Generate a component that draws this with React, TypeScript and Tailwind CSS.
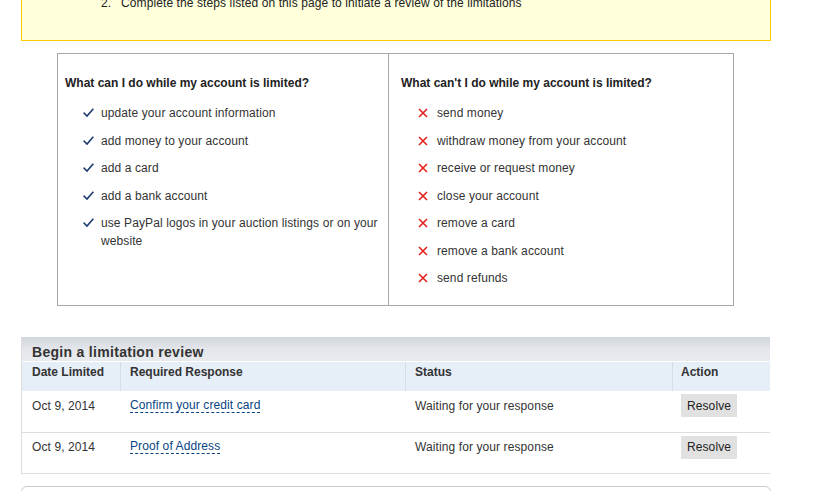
import React from "react";

const Check = () => (
  <svg width="11" height="10" viewBox="0 0 11 10" fill="none">
    <path d="M1.2 5.2 L4 8 L9.8 1.4" stroke="#1c3a6e" strokeWidth="1.6" strokeLinecap="square" strokeLinejoin="miter" />
  </svg>
);

const Cross = () => (
  <svg width="10" height="10" viewBox="0 0 10 10" fill="none">
    <path d="M1 1 L9 9 M9 1 L1 9" stroke="#e3211c" strokeWidth="1.6" />
  </svg>
);

const can = [
  "update your account information",
  "add money to your account",
  "add a card",
  "add a bank account",
  "use PayPal logos in your auction listings or on your website",
];

const cant = [
  "send money",
  "withdraw money from your account",
  "receive or request money",
  "close your account",
  "remove a card",
  "remove a bank account",
  "send refunds",
];

const rows = [
  { date: "Oct 9, 2014", resp: "Confirm your credit card" },
  { date: "Oct 9, 2014", resp: "Proof of Address" },
];

export default function App() {
  return (
    <div className="bg-white w-[827px] h-[491px] overflow-hidden font-['Liberation_Sans',Arial,sans-serif] text-[12px] text-[#333] tracking-[0.1px]">
      <div className="ml-[21px] w-[750px] -mt-[25px] border border-[#ffcc00] bg-[#ffffdc] pl-[79px] pt-[20px] pb-[29px] leading-[15px] text-[#222]">
        <div className="flex">
          <span className="w-[20px]">2.</span>
          <span>Complete the steps listed on this page to initiate a review of the limitations</span>
        </div>
      </div>

      <div className="mt-[12px] ml-[57px] w-[677px] h-[253px] border border-[#a8a8a8] flex">
        <div className="w-[331px] border-r border-[#a8a8a8] pl-[7px] pt-[20px] pr-[2px]">
          <div className="font-bold leading-[18px] text-[#222] tracking-normal">What can I do while my account is limited?</div>
          <ul className="mt-[12px] pl-[18px] flex flex-col gap-[9.5px]">
            {can.map((t) => (
              <li key={t} className="flex items-start leading-[18px]">
                <div className="w-[18px] h-[18px] flex items-center shrink-0">
                  <Check />
                </div>
                <span>{t}</span>
              </li>
            ))}
          </ul>
        </div>
        <div className="flex-1 pl-[12px] pt-[20px]">
          <div className="font-bold leading-[18px] text-[#222] tracking-normal">What can't I do while my account is limited?</div>
          <ul className="mt-[12px] pl-[17px] flex flex-col gap-[9.5px]">
            {cant.map((t) => (
              <li key={t} className="flex items-start leading-[18px]">
                <div className="w-[19px] h-[18px] flex items-center shrink-0">
                  <Cross />
                </div>
                <span>{t}</span>
              </li>
            ))}
          </ul>
        </div>
      </div>

      <div className="mt-[31px] ml-[21px] w-[749px] border-l border-[#dcdcdc]">
        <div className="h-[25px] bg-gradient-to-b from-[#d2d7dd] via-[#e3e6ea] to-[#e8ebee] border-b border-white pl-[10px] pt-[7px] leading-[17px] text-[14px] font-bold tracking-[0.3px] text-[#333]">
          Begin a limitation review
        </div>
        <div className="grid grid-cols-[98px_285px_267px_98px] h-[29px] bg-[#e6eef8] font-bold leading-[15px] text-[#333] tracking-normal">
          <div className="pl-[10px] pt-[3px]">Date Limited</div>
          <div className="pl-[9px] pt-[3px] border-l border-[#d6dde6]">Required Response</div>
          <div className="pl-[9px] pt-[3px] border-l border-[#d6dde6]">Status</div>
          <div className="pl-[8px] pt-[3px] border-l border-[#d6dde6]">Action</div>
        </div>
        {rows.map((r, i) => (
          <div key={i} className="grid grid-cols-[98px_285px_267px_98px] h-[41.5px] border-b border-[#dddddd] pt-[3px]">
            <div className="pl-[10px] h-[23px] flex items-center">{r.date}</div>
            <div className="pl-[10px] h-[23px] flex items-center">
              <span className="inline-block leading-[13px] text-[#084482] border-b border-dashed border-[#084482]">{r.resp}</span>
            </div>
            <div className="pl-[10px] h-[23px] flex items-center">Waiting for your response</div>
            <div className="pl-[9px] h-[23px] flex items-center">
              <div className="w-[56px] h-[23px] bg-[#e1e1e1] flex items-center justify-center text-[#222]">Resolve</div>
            </div>
          </div>
        ))}
      </div>

      <div className="mt-[12px] ml-[21px] w-[750px] h-[20px] border border-[#cccccc] rounded-t-[6px]" />
    </div>
  );
}
